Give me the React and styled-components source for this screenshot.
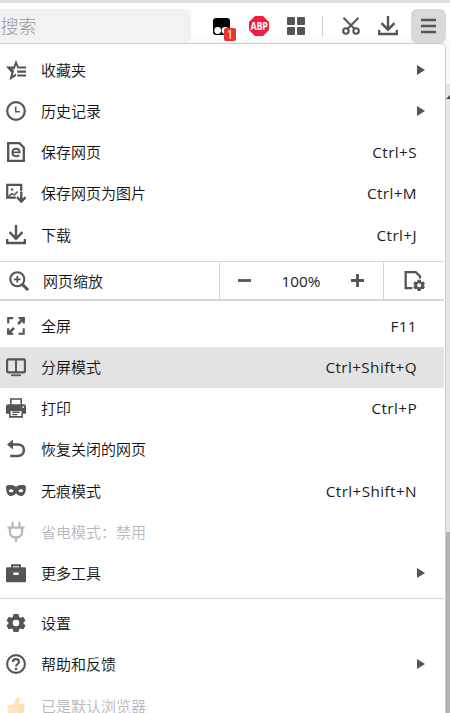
import React from 'react'
import styled, { createGlobalStyle } from 'styled-components';

const GlobalStyle = createGlobalStyle`
  * {
    box-sizing: border-box;
  }
  body {
    margin: 0;
    background: #fff;
    overflow: hidden;
    font-family: "Noto Sans", "Noto Sans CJK SC", sans-serif;
  }
`

const icons = {
  favorites: (
    <>
      <path d="M10 0l2.6 6.4H20v2.2h-8.4L10 5.2 8.6 9.2H5.2l2.7 2.4-1.2 4.2L10 13.5v2.6l-6.6 4.2 2-7.6L0 6.6h7.5z" fill="currentColor" />
      <path d="M7.5 8.5L5 8.8l2.8 2.7" fill="none" stroke="currentColor" strokeWidth="1.2" />
      <path d="M11.2 11.6H20M11.2 15.5H20" stroke="currentColor" strokeWidth="2.2" />
    </>
  ),
  history: (
    <>
      <circle cx="10" cy="10" r="8.8" fill="none" stroke="currentColor" strokeWidth="2.2" />
      <path d="M9.7 5.4v5.3h4.2" fill="none" stroke="currentColor" strokeWidth="1.5" />
    </>
  ),
  savePage: (
    <>
      <path d="M2.2 1.2h11.2l4.4 4.2v13.4H2.2z" fill="none" stroke="currentColor" strokeWidth="2.3" />
      <path d="M6.4 10.4h7.2c0-2.2-1.5-3.6-3.5-3.6s-3.7 1.5-3.7 3.8 1.5 3.7 3.8 3.7c1.2 0 2.3-.3 3.1-1" fill="none" stroke="currentColor" strokeWidth="1.9" />
    </>
  ),
  saveImage: (
    <>
      <path d="M9.8 14.6H1.2V1.8h14v6.4" fill="none" stroke="currentColor" strokeWidth="2.2" />
      <path d="M2 14l3.6-3.4 2.8 1.3 3.2-3.5" fill="none" stroke="currentColor" strokeWidth="1.5" />
      <circle cx="6" cy="6.5" r="1.2" fill="currentColor" />
      <path d="M15.3 8.7v9.6M11 14.2l4.3 4.4 4.3-4.4" fill="none" stroke="currentColor" strokeWidth="2.4" />
    </>
  ),
  download: (
    <path d="M10 0v14M3.5 7.2l6.5 6.5 6.5-6.5M1.1 14v4h17.8v-4" fill="none" stroke="currentColor" strokeWidth="2.4" />
  ),
  zoom: (
    <>
      <circle cx="8.3" cy="8.3" r="7" fill="none" stroke="currentColor" strokeWidth="2.1" />
      <path d="M13.4 13.4l5.7 5.7" stroke="currentColor" strokeWidth="2.9" />
      <path d="M5 8.3h6.6M8.3 5v6.6" stroke="currentColor" strokeWidth="1.8" />
    </>
  ),
  pageSettings: (
    <>
      <path d="M8 17.2H1.6V2h9.6l4 4v2" fill="none" stroke="currentColor" strokeWidth="2.2" />
      <g transform="translate(8.5 8.7) scale(.59)">
        <Gear />
      </g>
    </>
  ),
  fullscreen: (
    <>
      <path d="M2.2 7.5V2.1h5M12.6 2.1h5.1v5.4M2.2 12.3v5.4h5M12.6 17.7h5.1v-5.4" fill="none" stroke="currentColor" strokeWidth="2.1" />
      <path d="M12 8l5-5M8 12l-5 5" stroke="currentColor" strokeWidth="2.5" />
      <path d="M12.4 1.2h6.2v6.2zM1.2 12.4v6.2h6.2z" fill="currentColor" />
    </>
  ),
  split: (
    <>
      <rect x="1.1" y="2.4" width="17.8" height="13" rx="1" fill="none" stroke="currentColor" strokeWidth="2.1" />
      <path d="M10 2v13.5" stroke="currentColor" strokeWidth="2" />
      <path d="M5 18.3h10" stroke="currentColor" strokeWidth="1.7" />
    </>
  ),
  print: (
    <>
      <path d="M4.8 7V1h10.4v6" fill="none" stroke="currentColor" strokeWidth="1.6" />
      <path d="M2.2 6.2h15.6q2.2 0 2.2 2.2v7.3h-3.8v-3.7H3.8v3.7H0V8.4q0-2.2 2.2-2.2z" fill="currentColor" />
      <circle cx="17.2" cy="9.1" r=".9" fill="#fff" />
      <path d="M3.8 12.3v6.6h12.4v-6.6z" fill="#fff" stroke="currentColor" strokeWidth="1.6" />
      <path d="M6.3 14.3h7.4M6.3 16.6h5.2" stroke="currentColor" strokeWidth="1.4" />
    </>
  ),
  restore: (
    <>
      <path d="M5 5.4h6.8c3.7 0 6.1 2.3 6.1 5.7s-2.4 5.8-6.1 5.8H4.2" fill="none" stroke="currentColor" strokeWidth="2.5" />
      <path d="M1 5.4l6-5v10z" fill="currentColor" />
    </>
  ),
  mask: (
    <path
      d="M10 5.9C7.7 4 3 3.6.2 4.8 0 9 .3 12.8 3 14.5c2.5 1.5 5-.2 7-2 2 1.8 4.5 3.5 7 2 2.7-1.7 3-5.5 2.8-9.7C17 3.6 12.3 4 10 5.9zM2.7 9.7C4 7.7 6.5 7.9 7.7 10c-1.5 1.7-3.9 1.6-5-.3zm14.6 0c-1.1 1.9-3.5 2-5 .3 1.2-2.1 3.7-2.3 5-.3z"
      fill="currentColor"
      fillRule="evenodd"
    />
  ),
  plug: (
    <>
      <path d="M6.5 0v5.5M13.5 0v5.5M1.5 5.7h17M10 15.5V20" stroke="currentColor" strokeWidth="2.2" />
      <path d="M4 6v4.5c0 3 2.5 5 6 5s6-2 6-5V6" fill="none" stroke="currentColor" strokeWidth="2.3" />
    </>
  ),
  tools: (
    <>
      <path d="M6 4.5V2.2h8v2.3" fill="none" stroke="currentColor" strokeWidth="2" />
      <rect x="0" y="4.2" width="20" height="15" rx="1" fill="currentColor" />
      <rect x="7.3" y="9.5" width="5.4" height="2.4" fill="#fff" />
    </>
  ),
  settings: <Gear />,
  help: (
    <>
      <circle cx="10" cy="10" r="8.9" fill="none" stroke="currentColor" strokeWidth="2.1" />
      <path d="M6.9 8.1c0-1.9 1.2-3 3.1-3s3.1 1 3.1 2.7c0 2.1-3.1 2.3-3.1 4.7" fill="none" stroke="currentColor" strokeWidth="2.1" />
      <circle cx="10" cy="15" r="1.3" fill="currentColor" />
    </>
  ),
  thumb: (
    <>
      <path d="M1.5 9.5l6-1.3L10.5 2c.3-1.6 2.900-1.500 3.200.6.100 1.800-.6 3.600-1 4.900h4.600c1.900 0 1.900 2.400.5 2.700 1.500.5 1.200 2.700-.2 2.900 1.100.6.800 2.500-.5 2.700.8.8.1 2.400-1.300 2.400H8l-6.500-.8z" fill="#fce5b8" />
      <path d="M13 10.3h4.5M13 13.2h4.3M13 16h3.7" stroke="#efd29c" strokeWidth=".8" />
    </>
  ),
}

const topItems = [
  { icon: 'favorites', label: '收藏夹', sub: true },
  { icon: 'history', label: '历史记录', sub: true },
  { icon: 'savePage', label: '保存网页', keys: 'Ctrl+S' },
  { icon: 'saveImage', label: '保存网页为图片', keys: 'Ctrl+M' },
  { icon: 'download', label: '下载', keys: 'Ctrl+J' },
]

const midItems = [
  { icon: 'fullscreen', label: '全屏', keys: 'F11' },
  { icon: 'split', label: '分屏模式', keys: 'Ctrl+Shift+Q', active: true },
  { icon: 'print', label: '打印', keys: 'Ctrl+P' },
  { icon: 'restore', label: '恢复关闭的网页' },
  { icon: 'mask', label: '无痕模式', keys: 'Ctrl+Shift+N' },
  { icon: 'plug', label: '省电模式：禁用', disabled: true },
  { icon: 'tools', label: '更多工具', sub: true },
]

const bottomItems = [
  { icon: 'settings', label: '设置' },
  { icon: 'help', label: '帮助和反馈', sub: true },
  { icon: 'thumb', label: '已是默认浏览器', disabled: true },
]

function Gear() {
  return (
    <path
      d="M7.5 1h5l.5 2.7 1.7 1 2.6-.9 2.2 4-2 1.8v1l2 1.8-2.2 4-2.6-.9-1.7 1-.5 2.5h-5L7 16.5l-1.7-1-2.6.9-2.2-4 2-1.8v-1l-2-1.8 2.2-4 2.6.9 1.7-1zM10 6.7a3.3 3.3 0 1 0 0 6.6 3.3 3.3 0 0 0 0-6.6z"
      fill="currentColor"
      fillRule="evenodd"
    />
  )
}

const Icon = ({ name, size = 20 }) => (
  <IconSvg viewBox="0 0 20 20" width={size} height={size}>{icons[name]}</IconSvg>
)

const MenuItem = ({ icon, label, keys, sub, active, disabled }) => (
  <Row $active={active} $disabled={disabled}>
    <Icon name={icon} />
    <Label>{label}</Label>
    {keys && <Shortcut>{keys}</Shortcut>}
    {sub && <SubArrow viewBox="0 0 8 10"><path d="M0 0l8 5-8 5z" fill="#555" /></SubArrow>}
  </Row>
)

const Toolbar = () => (
  <ToolbarContainer>
    <SearchBox><span>或搜索</span></SearchBox>
    <Extensions>
      <Tampermonkey>
        <svg width="17" height="17" viewBox="0 0 17 17">
          <rect width="17" height="17" rx="3" fill="#000" />
          <circle cx="4.7" cy="12.5" r="3.4" fill="#fff" />
          <circle cx="12" cy="12.5" r="3.4" fill="#fff" />
        </svg>
        <Badge>1</Badge>
      </Tampermonkey>
      <AdBlock><span>ABP</span></AdBlock>
      <svg width="18" height="18" viewBox="0 0 18 18" fill="#555">
        <rect width="8" height="8" rx="1" />
        <rect x="10" width="8" height="8" rx="1" />
        <rect y="10" width="8" height="8" rx="1" />
        <rect x="10" y="10" width="8" height="8" rx="1" />
      </svg>
    </Extensions>
    <Separator />
    <Tools>
      <svg width="18" height="18" viewBox="0 0 18 18" fill="none" stroke="#555">
        <path d="M1.5.8l11.3 11.5M16.5.8L5.2 12.3" strokeWidth="2" />
        <circle cx="3.9" cy="14" r="2.7" strokeWidth="2.1" />
        <circle cx="14.1" cy="14" r="2.7" strokeWidth="2.1" />
      </svg>
      <Icon name="download" />
    </Tools>
    <MenuButton>
      <svg width="15" height="16" viewBox="0 0 15 16" stroke="#555" strokeWidth="2.4">
        <path d="M0 2h15M0 8h15M0 14h15" />
      </svg>
    </MenuButton>
  </ToolbarContainer>
)

const App = () => {
  return (
    <>
      <GlobalStyle />
      <Window>
        <Toolbar />
        <Content>
          <Menu>
            <Group $height={217} $top={5.4}>
              {topItems.map((item) => <MenuItem key={item.icon} {...item} />)}
            </Group>
            <ZoomRow>
              <ZoomLabel><Icon name="zoom" /><Label>网页缩放</Label></ZoomLabel>
              <ZoomControls>
                <svg width="13" height="13" stroke="#555" strokeWidth="2.8"><path d="M0 6.5h13" /></svg>
                <span>100%</span>
                <svg width="13" height="13" stroke="#555" strokeWidth="2.8"><path d="M0 6.5h13M6.5 0v13" /></svg>
              </ZoomControls>
              <ZoomSettings><Icon name="pageSettings" size={21} /></ZoomSettings>
            </ZoomRow>
            <Group $height={297} $top={4.6}>
              {midItems.map((item) => <MenuItem key={item.icon} {...item} />)}
            </Group>
            <Divider />
            <Group $height={130} $top={4.1}>
              {bottomItems.map((item) => <MenuItem key={item.icon} {...item} />)}
            </Group>
          </Menu>
          <PageEdge>
            <EdgeTop />
            <Track>
              <svg width="4" height="4"><path d="M0 4L4 0v4z" fill="#444" /></svg>
            </Track>
            <Thumb />
          </PageEdge>
        </Content>
      </Window>
    </>
  )
}

export default App;

const Window = styled.div`
  width: 450px;
  height: 713px;
  overflow: hidden;
  display: flex;
  flex-direction: column;
`

const IconSvg = styled.svg`
  flex: none;
  display: block;
`

const ToolbarContainer = styled.div`
  height: 43px;
  flex: none;
  display: flex;
  align-items: flex-start;
  border-top: 3px solid #dfdfdf;
  padding-top: 6px;
  background: linear-gradient(#fff 75%, #f8f8f8);
  color: #555;
`

const SearchBox = styled.div`
  width: 191px;
  height: 34px;
  border-radius: 0 5px 5px 0;
  background: #f2f2f2;
  color: #999;
  font-family: "Noto Sans CJK SC", sans-serif;
  font-size: 18px;
  font-weight: 300;
  line-height: 33px;
  overflow: hidden;
  span {
    margin-left: -17.5px;
  }
`

const Extensions = styled.div`
  display: flex;
  align-items: center;
  height: 34px;
  width: 131px;
  padding-left: 22px;
  gap: 19px;
`

const Tampermonkey = styled.div`
  position: relative;
  width: 17px;
  height: 17px;
  svg {
    display: block;
  }
`

const Badge = styled.span`
  position: absolute;
  left: 11px;
  top: 10px;
  width: 12px;
  height: 13px;
  border-radius: 2px;
  background: #ee3030;
  color: #fff;
  font-size: 12px;
  line-height: 13px;
  text-align: center;
`

const AdBlock = styled.div`
  width: 20px;
  height: 20px;
  margin-right: -1px;
  clip-path: polygon(30% 0, 70% 0, 100% 30%, 100% 70%, 70% 100%, 30% 100%, 0 70%, 0 30%);
  background: #f01c40;
  color: #fff;
  font: 700 9px/20px "Open Sans", sans-serif;
  letter-spacing: -0.3px;
  text-align: center;
  span {
    display: block;
    transform: scaleY(1.25);
  }
`

const Separator = styled.div`
  width: 1px;
  height: 20px;
  margin-top: 7px;
  background: #d0d0d0;
`

const Tools = styled.div`
  display: flex;
  align-items: center;
  height: 34px;
  width: 88px;
  padding-left: 19px;
  gap: 18px;
`

const MenuButton = styled.div`
  width: 35px;
  height: 34px;
  border-radius: 6px;
  background: #d9d9d9;
  display: flex;
  align-items: center;
  justify-content: center;
`

const Content = styled.div`
  flex: 1;
  min-height: 0;
  display: flex;
`

const Menu = styled.div`
  width: 446px;
  padding-right: 1px;
  border-top: 1px solid #ccc;
  border-right: 1px solid #ccc;
  border-top-right-radius: 5px;
  background: #fff;
`

const Group = styled.div`
  height: ${({ $height }) => $height}px;
  padding-top: ${({ $top }) => $top}px;
`

const Label = styled.span`
  flex: 1;
  font-size: 15px;
  font-family: "Noto Sans CJK SC", sans-serif;
  font-weight: 350;
  line-height: 20px;
  white-space: nowrap;
  color: #111;
`

const Row = styled.div`
  height: 41.25px;
  display: flex;
  align-items: center;
  gap: 15px;
  padding: 0 27px 1px 6px;
  background: ${({ $active }) => ($active ? '#e3e3e3' : 'transparent')};
  color: ${({ $disabled }) => ($disabled ? '#b8b8b8' : '#555')};
  ${Label} {
    color: ${({ $disabled }) => ($disabled ? '#b8b8bc' : '#111')};
  }
`

const Shortcut = styled.span`
  font-family: "Open Sans", sans-serif;
  font-size: 15.3px;
  line-height: 20px;
  letter-spacing: 0.4px;
  color: #1c1c1c;
`

const SubArrow = styled.svg`
  width: 8px;
  height: 10px;
  margin-right: -8px;
`

const ZoomRow = styled.div`
  height: 40px;
  display: flex;
  border-top: 1px solid #d6d6d6;
  border-bottom: 2px solid #d6d6d6;
  color: #555;
`

const ZoomLabel = styled.div`
  width: 219px;
  display: flex;
  align-items: center;
  gap: 14px;
  padding-left: 9px;
`

const ZoomControls = styled.div`
  width: 164px;
  display: flex;
  align-items: center;
  justify-content: space-between;
  padding: 0 19px 0 18px;
  border-left: 1px solid #d6d6d6;
  font-family: "Open Sans", sans-serif;
  font-size: 15.3px;
  color: #1c1c1c;
`

const ZoomSettings = styled.div`
  flex: 1;
  display: flex;
  align-items: center;
  justify-content: center;
  border-left: 1px solid #d6d6d6;
`

const Divider = styled.div`
  height: 1px;
  background: #d6d6d6;
`

const PageEdge = styled.div`
  flex: 1;
  display: flex;
  flex-direction: column;
`

const EdgeTop = styled.div`
  height: 42px;
  background: #f8f8f8;
  border-bottom: 1px solid #ddd;
`

const Track = styled.div`
  height: 447px;
  padding-top: 10px;
  background: #e5e5e5;
  svg {
    display: block;
  }
`

const Thumb = styled.div`
  flex: 1;
  background: #b3b3b3;
`
